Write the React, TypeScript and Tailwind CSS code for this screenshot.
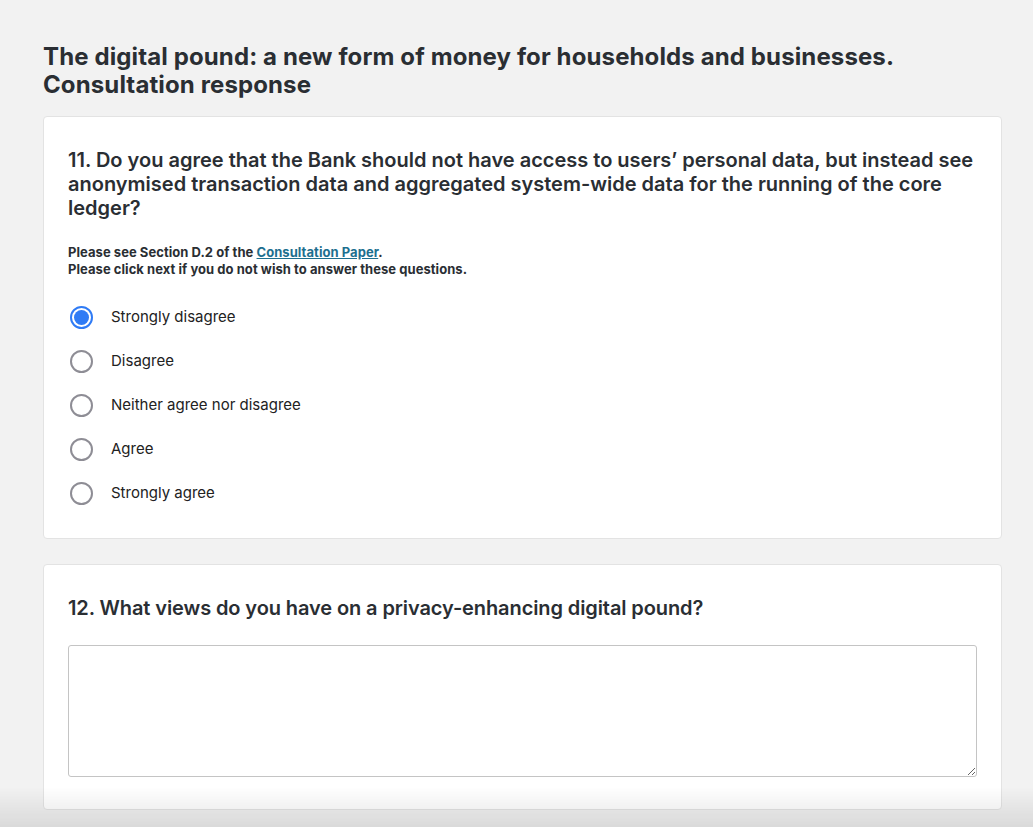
import React, { useState } from "react";

const options = [
  "Strongly disagree",
  "Disagree",
  "Neither agree nor disagree",
  "Agree",
  "Strongly agree",
];

function Radio({ checked }: { checked: boolean }) {
  return checked ? (
    <span className="flex h-[23px] w-[23px] shrink-0 items-center justify-center rounded-full border-[2px] border-[#2f7bf5] bg-white">
      <span className="h-[15px] w-[15px] rounded-full bg-[#2f7bf5]" />
    </span>
  ) : (
    <span className="h-[23px] w-[23px] shrink-0 rounded-full border-[2px] border-[#8e8d95] bg-white" />
  );
}

export default function App() {
  const [sel, setSel] = useState(0);
  return (
    <div className="relative min-h-screen bg-[#f2f2f2] pl-[43px] pr-[31px] pt-[43px] pb-[40px] font-['Inter',sans-serif] text-[#2a2e33]">
      <h1 className="text-[24px] font-bold leading-[28px] tracking-[0.12px]">
        The digital pound: a new form of money for households and businesses.
        <br />
        Consultation response
      </h1>

      <div className="mt-[17px] rounded-[4px] border border-[#e3e3e3] bg-white px-[24px] pt-[31px] pb-[23px]">
        <h2 className="text-[20px] font-semibold leading-[24px]">
          11. Do you agree that the Bank should not have access to users’ personal data, but instead see
          anonymised transaction data and aggregated system-wide data for the running of the core
          ledger?
        </h2>
        <div className="mt-[24px] text-[13px] font-bold leading-[17px] tracking-[0.05px]">
          Please see Section D.2 of the{" "}
          <a href="#" className="text-[#1d6f8f] underline">
            Consultation Paper
          </a>
          .
          <br />
          Please click next if you do not wish to answer these questions.
        </div>
        <div className="mt-[17px] flex flex-col">
          {options.map((o, i) => (
            <label
              key={o}
              onClick={() => setSel(i)}
              className="flex h-[44px] cursor-pointer items-center gap-[18px] pl-[2px] text-[15px] text-[#222]"
            >
              <Radio checked={sel === i} />
              <span>{o}</span>
            </label>
          ))}
        </div>
      </div>

      <div className="mt-[25px] rounded-[4px] border border-[#e3e3e3] bg-white px-[24px] pt-[31px] pb-[32px]">
        <h2 className="text-[20px] font-semibold leading-[24px] tracking-[-0.1px]">
          12. What views do you have on a privacy-enhancing digital pound?
        </h2>
        <textarea className="mt-[25px] block h-[132px] w-full rounded-[3px] border border-[#c4c4c4] bg-white" />
      </div>

      <div className="pointer-events-none fixed inset-x-0 bottom-0 h-[40px] bg-gradient-to-b from-transparent to-black/10" />
    </div>
  );
}
